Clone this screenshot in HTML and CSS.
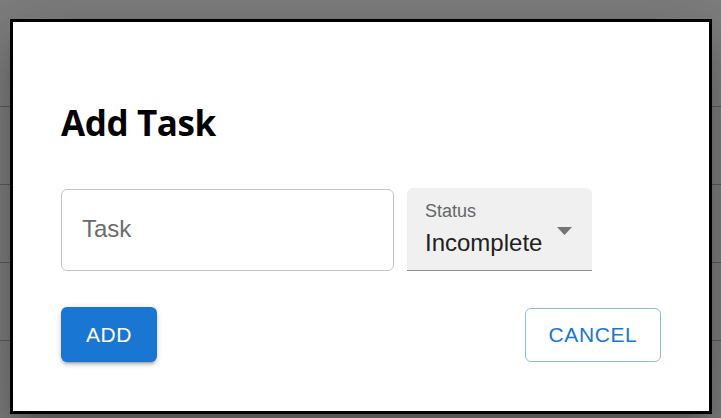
FILE: index.html
```html
<!DOCTYPE html>
<html lang="en">
<head>
<meta charset="utf-8">
<title>Add Task</title>
<link rel="stylesheet" href="styles.css">
</head>
<body>
<div class="backdrop">
  <div class="row"></div>
  <div class="row"></div>
  <div class="row"></div>
  <div class="row"></div>
  <div class="row"></div>
</div>
<div class="dialog" role="dialog" aria-labelledby="dlg-title">
  <h2 class="dialog-title" id="dlg-title">Add Task</h2>
  <div class="fields">
    <div class="text-field">
      <span class="placeholder">Task</span>
    </div>
    <div class="select-field">
      <div class="select-text">
        <span class="select-label">Status</span>
        <span class="select-value">Incomplete</span>
      </div>
      <svg class="select-arrow" width="15" height="8" viewBox="7 10 10 5" preserveAspectRatio="none" aria-hidden="true"><path d="M7 10l5 5 5-5z" fill="#757575"/></svg>
    </div>
  </div>
  <div class="actions">
    <button class="btn btn-contained" type="button">ADD</button>
    <button class="btn btn-outlined" type="button">CANCEL</button>
  </div>
</div>
</body>
</html>
```
FILE: styles.css
```css
html, body {
  margin: 0;
  padding: 0;
}
body {
  width: 721px;
  height: 418px;
  overflow: hidden;
  background: #7e7e7e;
  font-family: "Liberation Sans", Arial, sans-serif;
}
.backdrop {
  padding-top: 29px;
}
.row {
  height: 78px;
  box-sizing: border-box;
  border-bottom: 1.5px solid #5c5c5c;
}
.dialog {
  position: absolute;
  left: 10px;
  top: 19px;
  width: 702px;
  height: 395px;
  box-sizing: border-box;
  border: 3px solid #000;
  background: #fff;
  padding: 0 48px;
  box-shadow: 0 16px 22px -10px rgba(0,0,0,0.2), 0 36px 57px 4px rgba(0,0,0,0.14), 0 13px 69px 12px rgba(0,0,0,0.12);
  display: flex;
  flex-direction: column;
}
.dialog-title {
  margin: 83px 0 0 0;
  height: 36px;
  line-height: 36px;
  font-family: "Open Sans", "Noto Sans", sans-serif;
  font-weight: 700;
  font-size: 35px;
  letter-spacing: -0.4px;
  color: #000;
}
.fields {
  margin-top: 48px;
  display: flex;
  gap: 13px;
  height: 82px;
}
.text-field {
  width: 333px;
  box-sizing: border-box;
  border: 1.5px solid #c4c4c4;
  border-radius: 6px;
  display: flex;
  align-items: center;
  padding: 0 0 3px 20px;
}
.placeholder {
  font-size: 24px;
  line-height: 24px;
  color: #6b6b6b;
}
.select-field {
  width: 185px;
  box-sizing: border-box;
  background: #f0f0f0;
  border-bottom: 1.5px solid #8f8f8f;
  border-radius: 6px 6px 0 0;
  display: flex;
  padding-left: 18px;
  margin-top: -1px;
  height: 83px;
}
.select-text {
  flex: 1;
  display: flex;
  flex-direction: column;
  padding-top: 14px;
}
.select-label {
  font-size: 18px;
  line-height: 18px;
  color: #666;
}
.select-value {
  margin-top: 11px;
  font-size: 24px;
  line-height: 24px;
  color: #212121;
}
.select-arrow {
  margin: 39px 20px 0 0;
  flex: none;
}
.actions {
  margin-top: 36px;
  display: flex;
  justify-content: space-between;
  align-items: flex-start;
}
.btn {
  font-family: "Liberation Sans", Arial, sans-serif;
  font-size: 21px;
  letter-spacing: 0.6px;
  height: 55px;
  border-radius: 6px;
  box-sizing: border-box;
  cursor: pointer;
  padding: 0;
}
.btn-contained {
  width: 96px;
  background: #1976d2;
  color: #fff;
  border: none;
  box-shadow: 0 4px 1.5px -3px rgba(0,0,0,0.2), 0 3px 3px 0 rgba(0,0,0,0.14), 0 1.5px 7.5px 0 rgba(0,0,0,0.12);
}
.btn-outlined {
  width: 136px;
  height: 54px;
  margin-top: 1px;
  background: #fff;
  color: #1976d2;
  border: 1.5px solid #8cbbe9;
}
```
